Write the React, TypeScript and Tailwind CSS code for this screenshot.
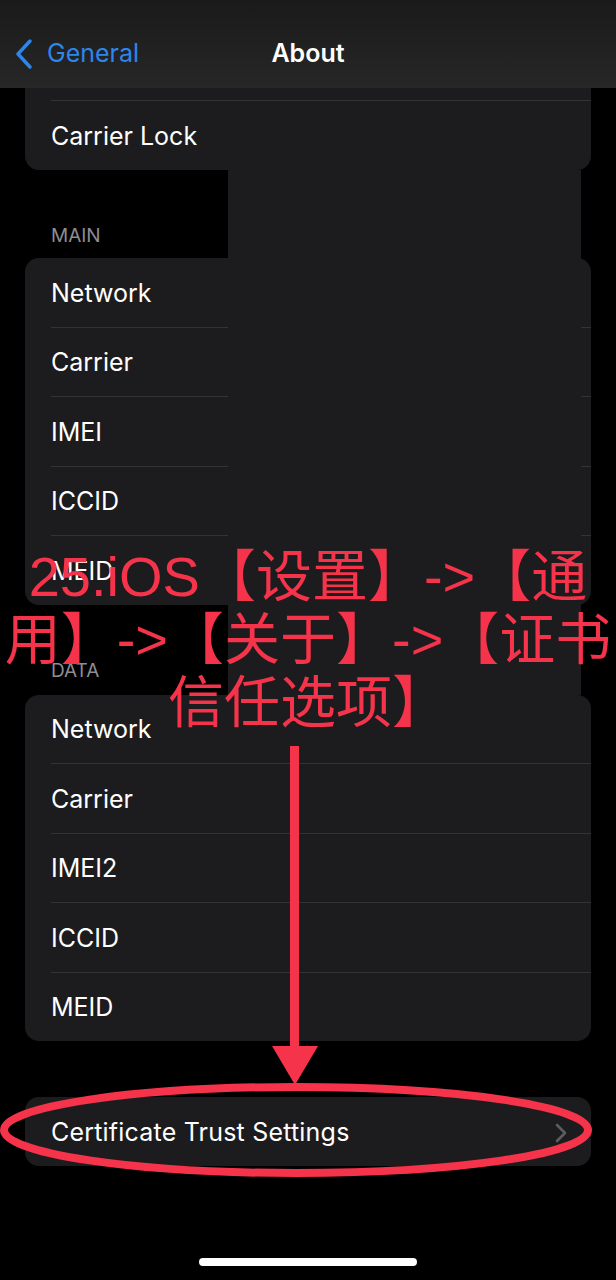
import React from "react";

const ui = { fontFamily: "Inter, 'Liberation Sans', sans-serif" };
const note = {
	fontFamily: "'Liberation Sans', 'Noto Sans CJK SC', sans-serif",
};

const Row = ({ label, last }: { label: string; last?: boolean }) => (
	<>
		<div className="h-[68.5px] flex items-center pl-[26px] pt-[2px] text-white text-[25px]">
			{label}
		</div>
		{!last && <div className="ml-[26px] h-px bg-[#333336]" />}
	</>
);

const Group = ({
	title,
	items,
	gap,
}: {
	title: string;
	items: string[];
	gap: string;
}) => (
	<>
		<div className="pt-[56px] pl-[51px] text-[19px] leading-[20px] text-[#8d8d92]">
			{title}
		</div>
		<div
			className={`${gap} mx-[25px] w-[566px] rounded-[14px] bg-[#1c1c1e] overflow-hidden`}
		>
			{items.map((it, i) => (
				<Row key={it + i} label={it} last={i === items.length - 1} />
			))}
		</div>
	</>
);

export default function App() {
	return (
		<div
			className="relative w-[616px] h-[1280px] bg-black overflow-hidden"
			style={ui}
		>
			{/* nav bar */}
			<div className="h-[88px] bg-gradient-to-b from-[#1a1a1a] to-[#272727] flex items-center relative pt-[20px]">
				<div className="flex items-center pl-[14px] gap-[13px] text-[#2c86ee] text-[25px]">
					<svg width="20" height="30" viewBox="0 0 20 30" fill="none">
						<path
							d="M16 2 L4 15 L16 28"
							stroke="#2c86ee"
							strokeWidth="3.4"
							strokeLinecap="round"
							strokeLinejoin="round"
						/>
					</svg>
					<span>General</span>
				</div>
				<div className="absolute left-0 right-0 top-[20px] bottom-0 flex items-center justify-center text-white text-[25px] font-semibold pointer-events-none">
					About
				</div>
			</div>

			{/* first card, top hidden under the bar */}
			<div className="mx-[25px] w-[566px] rounded-b-[14px] bg-[#1c1c1e]">
				<div className="h-[12px]" />
				<div className="ml-[26px] h-px bg-[#333336]" />
				<div className="h-[69px] flex items-center pl-[26px] pt-[2px] text-white text-[25px]">
					Carrier Lock
				</div>
			</div>

			<Group
				title="MAIN"
				gap="mt-[12px]"
				items={["Network", "Carrier", "IMEI", "ICCID", "MEID"]}
			/>
			<Group
				title="DATA"
				gap="mt-[14px]"
				items={["Network", "Carrier", "IMEI2", "ICCID", "MEID"]}
			/>

			<div className="mt-[56px] mx-[25px] w-[566px] h-[69px] rounded-[14px] bg-[#1c1c1e] flex items-center justify-between pl-[26px] pr-[24px] pt-[2px]">
				<span className="text-white text-[25px] tracking-[0.2px]">
					Certificate Trust Settings
				</span>
				<svg width="12" height="20" viewBox="0 0 12 20" fill="none">
					<path
						d="M2 2 L10 10 L2 18"
						stroke="#5c5c61"
						strokeWidth="2.6"
						strokeLinecap="round"
						strokeLinejoin="round"
					/>
				</svg>
			</div>

			<div className="mt-[92px] mx-auto w-[218px] h-[8px] rounded-full bg-white" />

			{/* redaction block */}
			<div className="absolute left-[228px] top-[170px] w-[353px] h-[525px] bg-[#1c1c1e]" />

			{/* annotation text */}
			<div
				className="absolute left-0 top-[545px] w-[616px] text-center text-[56px] leading-[63px] text-[#f5334b] whitespace-nowrap"
				style={note}
			>
				<div>25.iOS【设置】-&gt;【通</div>
				<div>用】-&gt;【关于】-&gt;【证书</div>
				<div>信任选项】</div>
			</div>

			{/* arrow + ellipse */}
			<svg
				className="absolute left-0 top-0 pointer-events-none"
				width="616"
				height="1280"
				viewBox="0 0 616 1280"
			>
				<rect x="290" y="746" width="9" height="304" fill="#f5334b" />
				<polygon points="272,1046 318,1046 295,1085" fill="#f5334b" />
				<ellipse
					cx="296"
					cy="1130"
					rx="292"
					ry="43"
					fill="none"
					stroke="#f5334b"
					strokeWidth="8"
				/>
			</svg>
		</div>
	);
}
